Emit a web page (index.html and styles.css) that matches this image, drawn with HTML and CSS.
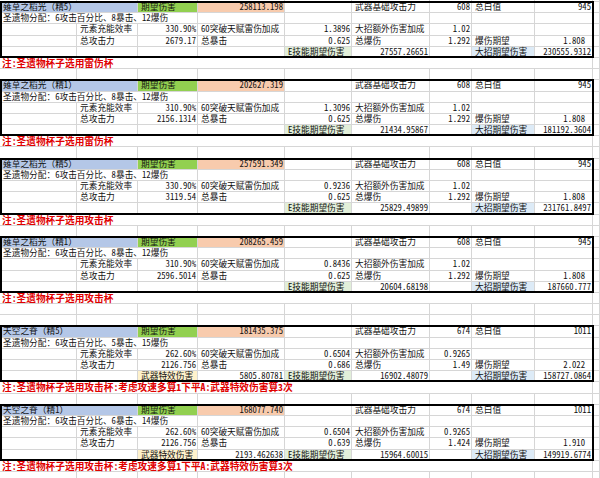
FILE: index.html
```html
<!DOCTYPE html>
<html lang="zh-CN">
<head>
<meta charset="utf-8">
<title>伤害计算</title>
<link rel="stylesheet" href="styles.css">
</head>
<body>
<div class="sheet">
  <div class="r top"><div class="c"></div><div class="c"></div><div class="c"></div><div class="c"></div><div class="c"></div><div class="c"></div><div class="c"></div><div class="c"></div><div class="c"></div><div class="c"></div></div>

  <!-- block 1 -->
  <div class="blk">
    <div class="r"><div class="c s2 f-name">薙草之稻光（精5）</div><div class="c f-green">期望伤害</div><div class="c num f-orange">258113.198</div><div class="c"></div><div class="c">武器基础攻击力</div><div class="c num">608</div><div class="c">总白值</div><div class="c num">945</div><div class="c"></div></div>
    <div class="r"><div class="c s3">圣遗物分配：6攻击百分比、8暴击、12爆伤</div><div class="c"></div><div class="c"></div><div class="c"></div><div class="c"></div><div class="c"></div><div class="c"></div><div class="c"></div></div>
    <div class="r"><div class="c"></div><div class="c">元素充能效率</div><div class="c num">330.90%</div><div class="c">60突破天赋雷伤加成</div><div class="c num">1.3896</div><div class="c">大招额外伤害加成</div><div class="c num">1.02</div><div class="c"></div><div class="c"></div><div class="c"></div></div>
    <div class="r"><div class="c"></div><div class="c">总攻击力</div><div class="c num">2679.17</div><div class="c">总暴击</div><div class="c num">0.625</div><div class="c">总爆伤</div><div class="c num">1.292</div><div class="c">爆伤期望</div><div class="c num pad">1.808</div><div class="c"></div></div>
    <div class="r"><div class="c"></div><div class="c"></div><div class="c"></div><div class="c"></div><div class="c f-lgreen">E技能期望伤害</div><div class="c num">27557.26651</div><div class="c"></div><div class="c f-lblue">大招期望伤害</div><div class="c num">230555.9312</div><div class="c"></div></div>
  </div>
  <div class="r"><div class="c s9 note">注:圣遗物杯子选用雷伤杯</div><div class="c"></div></div>
  <div class="r"><div class="c"></div><div class="c"></div><div class="c"></div><div class="c"></div><div class="c"></div><div class="c"></div><div class="c"></div><div class="c"></div><div class="c"></div><div class="c"></div></div>

  <!-- block 2 -->
  <div class="blk">
    <div class="r"><div class="c s2 f-name">薙草之稻光（精1）</div><div class="c f-green">期望伤害</div><div class="c num f-orange">202627.319</div><div class="c"></div><div class="c">武器基础攻击力</div><div class="c num">608</div><div class="c">总白值</div><div class="c num">945</div><div class="c"></div></div>
    <div class="r"><div class="c s3">圣遗物分配：6攻击百分比、8暴击、12爆伤</div><div class="c"></div><div class="c"></div><div class="c"></div><div class="c"></div><div class="c"></div><div class="c"></div><div class="c"></div></div>
    <div class="r"><div class="c"></div><div class="c">元素充能效率</div><div class="c num">310.90%</div><div class="c">60突破天赋雷伤加成</div><div class="c num">1.3096</div><div class="c">大招额外伤害加成</div><div class="c num">1.02</div><div class="c"></div><div class="c"></div><div class="c"></div></div>
    <div class="r"><div class="c"></div><div class="c">总攻击力</div><div class="c num">2156.1314</div><div class="c">总暴击</div><div class="c num">0.625</div><div class="c">总爆伤</div><div class="c num">1.292</div><div class="c">爆伤期望</div><div class="c num pad">1.808</div><div class="c"></div></div>
    <div class="r"><div class="c"></div><div class="c"></div><div class="c"></div><div class="c"></div><div class="c f-lgreen">E技能期望伤害</div><div class="c num">21434.95867</div><div class="c"></div><div class="c f-lblue">大招期望伤害</div><div class="c num">181192.3604</div><div class="c"></div></div>
  </div>
  <div class="r"><div class="c s9 note">注:圣遗物杯子选用雷伤杯</div><div class="c"></div></div>
  <div class="r"><div class="c"></div><div class="c"></div><div class="c"></div><div class="c"></div><div class="c"></div><div class="c"></div><div class="c"></div><div class="c"></div><div class="c"></div><div class="c"></div></div>

  <!-- block 3 -->
  <div class="blk">
    <div class="r"><div class="c s2 f-name">薙草之稻光（精5）</div><div class="c f-green">期望伤害</div><div class="c num f-orange">257591.349</div><div class="c"></div><div class="c">武器基础攻击力</div><div class="c num">608</div><div class="c">总白值</div><div class="c num">945</div><div class="c"></div></div>
    <div class="r"><div class="c s3">圣遗物分配：6攻击百分比、8暴击、12爆伤</div><div class="c"></div><div class="c"></div><div class="c"></div><div class="c"></div><div class="c"></div><div class="c"></div><div class="c"></div></div>
    <div class="r"><div class="c"></div><div class="c">元素充能效率</div><div class="c num">330.90%</div><div class="c">60突破天赋雷伤加成</div><div class="c num">0.9236</div><div class="c">大招额外伤害加成</div><div class="c num">1.02</div><div class="c"></div><div class="c"></div><div class="c"></div></div>
    <div class="r"><div class="c"></div><div class="c">总攻击力</div><div class="c num">3119.54</div><div class="c">总暴击</div><div class="c num">0.625</div><div class="c">总爆伤</div><div class="c num">1.292</div><div class="c">爆伤期望</div><div class="c num pad">1.808</div><div class="c"></div></div>
    <div class="r"><div class="c"></div><div class="c"></div><div class="c"></div><div class="c"></div><div class="c f-lgreen">E技能期望伤害</div><div class="c num">25829.49899</div><div class="c"></div><div class="c f-lblue">大招期望伤害</div><div class="c num">231761.8497</div><div class="c"></div></div>
  </div>
  <div class="r"><div class="c s9 note">注:圣遗物杯子选用攻击杯</div><div class="c"></div></div>
  <div class="r"><div class="c"></div><div class="c"></div><div class="c"></div><div class="c"></div><div class="c"></div><div class="c"></div><div class="c"></div><div class="c"></div><div class="c"></div><div class="c"></div></div>

  <!-- block 4 -->
  <div class="blk">
    <div class="r"><div class="c s2 f-name">薙草之稻光（精1）</div><div class="c f-green">期望伤害</div><div class="c num f-orange">208265.459</div><div class="c"></div><div class="c">武器基础攻击力</div><div class="c num">608</div><div class="c">总白值</div><div class="c num">945</div><div class="c"></div></div>
    <div class="r"><div class="c s3">圣遗物分配：6攻击百分比、8暴击、12爆伤</div><div class="c"></div><div class="c"></div><div class="c"></div><div class="c"></div><div class="c"></div><div class="c"></div><div class="c"></div></div>
    <div class="r"><div class="c"></div><div class="c">元素充能效率</div><div class="c num">310.90%</div><div class="c">60突破天赋雷伤加成</div><div class="c num">0.8436</div><div class="c">大招额外伤害加成</div><div class="c num">1.02</div><div class="c"></div><div class="c"></div><div class="c"></div></div>
    <div class="r"><div class="c"></div><div class="c">总攻击力</div><div class="c num">2596.5014</div><div class="c">总暴击</div><div class="c num">0.625</div><div class="c">总爆伤</div><div class="c num">1.292</div><div class="c">爆伤期望</div><div class="c num pad">1.808</div><div class="c"></div></div>
    <div class="r"><div class="c"></div><div class="c"></div><div class="c"></div><div class="c"></div><div class="c f-lgreen">E技能期望伤害</div><div class="c num">20604.68198</div><div class="c"></div><div class="c f-lblue">大招期望伤害</div><div class="c num">187660.777</div><div class="c"></div></div>
  </div>
  <div class="r"><div class="c s9 note">注:圣遗物杯子选用攻击杯</div><div class="c"></div></div>
  <div class="r"><div class="c"></div><div class="c"></div><div class="c"></div><div class="c"></div><div class="c"></div><div class="c"></div><div class="c"></div><div class="c"></div><div class="c"></div><div class="c"></div></div>
  <div class="r"><div class="c"></div><div class="c"></div><div class="c"></div><div class="c"></div><div class="c"></div><div class="c"></div><div class="c"></div><div class="c"></div><div class="c"></div><div class="c"></div></div>

  <!-- block 5 -->
  <div class="blk">
    <div class="r"><div class="c s2 f-name">天空之脊（精5）</div><div class="c f-green">期望伤害</div><div class="c num f-orange">181435.375</div><div class="c"></div><div class="c">武器基础攻击力</div><div class="c num">674</div><div class="c">总白值</div><div class="c num">1011</div><div class="c"></div></div>
    <div class="r"><div class="c s3">圣遗物分配：6攻击百分比、5暴击、15爆伤</div><div class="c"></div><div class="c"></div><div class="c"></div><div class="c"></div><div class="c"></div><div class="c"></div><div class="c"></div></div>
    <div class="r"><div class="c"></div><div class="c">元素充能效率</div><div class="c num">262.60%</div><div class="c">60突破天赋雷伤加成</div><div class="c num">0.6504</div><div class="c">大招额外伤害加成</div><div class="c num">0.9265</div><div class="c"></div><div class="c"></div><div class="c"></div></div>
    <div class="r"><div class="c"></div><div class="c">总攻击力</div><div class="c num">2126.756</div><div class="c">总暴击</div><div class="c num">0.686</div><div class="c">总爆伤</div><div class="c num">1.49</div><div class="c">爆伤期望</div><div class="c num pad">2.022</div><div class="c"></div></div>
    <div class="r"><div class="c"></div><div class="c"></div><div class="c f-yellow">武器特效伤害</div><div class="c num">5805.80781</div><div class="c f-lgreen">E技能期望伤害</div><div class="c num">16902.48079</div><div class="c"></div><div class="c f-lblue">大招期望伤害</div><div class="c num">158727.0864</div><div class="c"></div></div>
  </div>
  <div class="r"><div class="c s9 note">注:圣遗物杯子选用攻击杯:考虑攻速多算1下平A:武器特效伤害算3次</div><div class="c"></div></div>
  <div class="r"><div class="c"></div><div class="c"></div><div class="c"></div><div class="c"></div><div class="c"></div><div class="c"></div><div class="c"></div><div class="c"></div><div class="c"></div><div class="c"></div></div>

  <!-- block 6 -->
  <div class="blk">
    <div class="r"><div class="c s2 f-name">天空之脊（精1）</div><div class="c f-green">期望伤害</div><div class="c num f-orange">168077.740</div><div class="c"></div><div class="c">武器基础攻击力</div><div class="c num">674</div><div class="c">总白值</div><div class="c num">1011</div><div class="c"></div></div>
    <div class="r"><div class="c s3">圣遗物分配：6攻击百分比、6暴击、14爆伤</div><div class="c"></div><div class="c"></div><div class="c"></div><div class="c"></div><div class="c"></div><div class="c"></div><div class="c"></div></div>
    <div class="r"><div class="c"></div><div class="c">元素充能效率</div><div class="c num">262.60%</div><div class="c">60突破天赋雷伤加成</div><div class="c num">0.6504</div><div class="c">大招额外伤害加成</div><div class="c num">0.9265</div><div class="c"></div><div class="c"></div><div class="c"></div></div>
    <div class="r"><div class="c"></div><div class="c">总攻击力</div><div class="c num">2126.756</div><div class="c">总暴击</div><div class="c num">0.639</div><div class="c">总爆伤</div><div class="c num">1.424</div><div class="c">爆伤期望</div><div class="c num pad">1.910</div><div class="c"></div></div>
    <div class="r"><div class="c"></div><div class="c"></div><div class="c f-yellow">武器特效伤害</div><div class="c num">2193.462638</div><div class="c f-lgreen">E技能期望伤害</div><div class="c num">15964.60015</div><div class="c"></div><div class="c f-lblue">大招期望伤害</div><div class="c num">149919.6774</div><div class="c"></div></div>
  </div>
  <div class="r"><div class="c s9 note">注:圣遗物杯子选用攻击杯:考虑攻速多算1下平A:武器特效伤害算3次</div><div class="c"></div></div>
  <div class="r"><div class="c"></div><div class="c"></div><div class="c"></div><div class="c"></div><div class="c"></div><div class="c"></div><div class="c"></div><div class="c"></div><div class="c"></div><div class="c"></div></div>
</div>
</body>
</html>
```

FILE: styles.css
```css
html, body {
  margin: 0;
  padding: 0;
  background: #ffffff;
}

.sheet {
  width: 600px;
  height: 478px;
  overflow: hidden;
  font-family: "Noto Sans Mono CJK SC", "Noto Sans CJK SC", sans-serif;
  color: #111;
}

.r {
  display: grid;
  grid-template-columns: 77px 61px 60px 87px 67px 78px 42px 63px 58px 7px;
  height: 11.2px;
}

.r.top {
  height: 2px;
}

.c {
  box-sizing: border-box;
  border-right: 1px solid #d6d6d6;
  border-bottom: 1px solid #d6d6d6;
  font-size: 8.7px;
  line-height: 10.2px;
  padding: 0 1px 0 3px;
  white-space: nowrap;
  overflow: visible;
}

.s2 { grid-column: span 2; }
.s3 { grid-column: span 3; }
.s9 { grid-column: span 9; }

.num {
  text-align: right;
}

.pad {
  padding-right: 7px;
}

.f-name { background: #b4c7e7; }
.f-green { background: #92d050; }
.f-orange { background: #f8cbad; }
.f-lgreen { background: #e2efda; }
.f-lblue { background: #ddebf7; }
.f-yellow { background: #fff2cc; }

.note {
  color: #e00000;
  font-weight: bold;
  font-size: 9.7px;
  line-height: 10.2px;
  padding-left: 2px;
}

.blk {
  position: relative;
}

.blk::after {
  content: "";
  position: absolute;
  left: 0;
  top: -1px;
  width: 594px;
  height: calc(100% + 1px);
  border: 2px solid #000;
  box-sizing: border-box;
  pointer-events: none;
}
```
